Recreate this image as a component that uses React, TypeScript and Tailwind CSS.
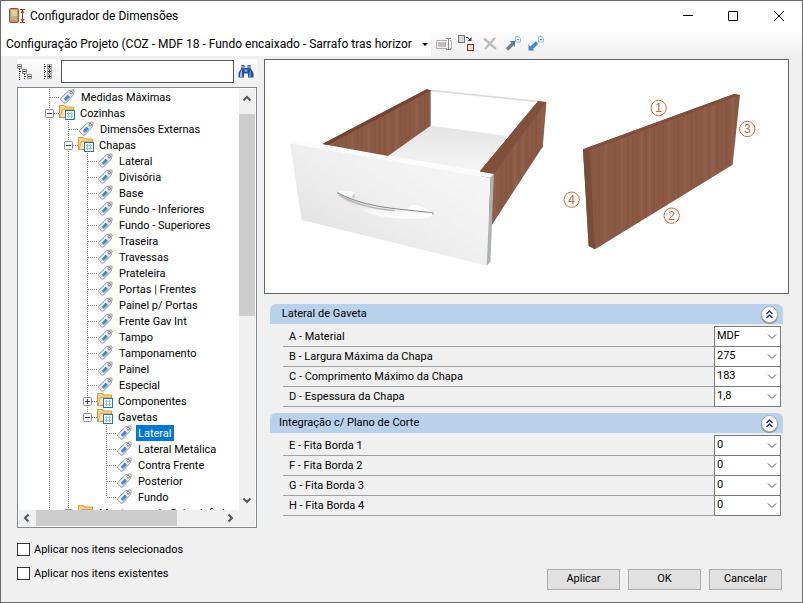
import { useState } from "react";
import type { ReactNode } from "react";

type Kind = "tag" | "folder";
type Box = "minus" | "plus" | null;

interface TreeRow {
  label: string;
  level: number;
  kind: Kind;
  box?: Box;
  last?: boolean;
}

const tag = (label: string, level: number, last = false): TreeRow => ({ label, level, kind: "tag", last });
const folder = (label: string, level: number, box: Box, last = false): TreeRow => ({ label, level, kind: "folder", box, last });

const rows: TreeRow[] = [
  tag("Medidas Máximas", 1),
  folder("Cozinhas", 1, "minus"),
  tag("Dimensões Externas", 2),
  folder("Chapas", 2, "minus"),
  tag("Lateral", 3),
  tag("Divisória", 3),
  tag("Base", 3),
  tag("Fundo - Inferiores", 3),
  tag("Fundo - Superiores", 3),
  tag("Traseira", 3),
  tag("Travessas", 3),
  tag("Prateleira", 3),
  tag("Portas | Frentes", 3),
  tag("Painel p/ Portas", 3),
  tag("Frente Gav Int", 3),
  tag("Tampo", 3),
  tag("Tamponamento", 3),
  tag("Painel", 3),
  tag("Especial", 3),
  folder("Componentes", 3, "plus"),
  folder("Gavetas", 3, "minus", true),
  tag("Lateral", 4),
  tag("Lateral Metálica", 4),
  tag("Contra Frente", 4),
  tag("Posterior", 4),
  tag("Fundo", 4, true),
  folder("Montagem de Caixa Inferior", 2, "minus"),
];

const sections = [
  {
    title: " Lateral de Gaveta",
    fields: [
      { label: "A - Material", value: "MDF" },
      { label: "B - Largura Máxima da Chapa", value: "275" },
      { label: "C - Comprimento Máximo da Chapa", value: "183" },
      { label: "D - Espessura da Chapa", value: "1,8" },
    ],
  },
  {
    title: "Integração c/ Plano de Corte",
    fields: [
      { label: "E - Fita Borda 1", value: "0" },
      { label: "F - Fita Borda 2", value: "0" },
      { label: "G - Fita Borda 3", value: "0" },
      { label: "H - Fita Borda 4", value: "0" },
    ],
  },
];

/* ---------- icons ---------- */

function AppIcon() {
  return (
    <svg width="17" height="16" viewBox="0 0 17 16">
      <rect x="0.5" y="0.5" width="9" height="14" rx="1" fill="#c9935f" stroke="#8a5a35" />
      <rect x="2" y="2" width="6" height="10" fill="#dccf9c" />
      <path d="M2 8h6v4H2z" fill="#c0b184" />
      <path d="M11 1.5h5M11 14.5h5M13.5 2v12" stroke="#a83a20" />
      <path d="M11.5 5 13.5 2l2 3zM11.5 11l2 3 2-3z" fill="#a83a20" />
    </svg>
  );
}

function TagIcon() {
  return (
    <svg width="17" height="16" viewBox="0 0 17 16" className="shrink-0">
      <path d="M1.5 9.5 9.5 1.8 14.5 0.8 15.2 2 14.2 6 6.5 14.2 5 14.2 1.5 10.8z" fill="#e6e6e8" stroke="#9c9ca0" />
      <path d="M2.6 10 10 3l1 1-7 7.5z" fill="#fff" />
      <path d="M4.6 9.8 8.6 5.6 11 7.9 7 12z" fill="#2f86d3" />
      <path d="m5.6 9.8 3-3.1M7.2 10.9l3-3.1" stroke="#8cc4f2" strokeDasharray="1 1" />
      <circle cx="12.2" cy="3.7" r="1.3" fill="#fff" stroke="#77777b" />
    </svg>
  );
}

function FolderIcon() {
  return (
    <svg width="17" height="16" viewBox="0 0 17 16" className="shrink-0">
      <path d="M0.5 12.5v-12h5l1 1.5h8v10.5z" fill="#f8d488" stroke="#d99a3e" />
      <path d="M1 12.5 3.5 4.500H15v3" fill="#fde9b8" stroke="#e0a64c" />
      <path d="M0.500 12.500H7" stroke="#d99a3e" />
      <rect x="6.500" y="5.500" width="9" height="9" fill="#fff" stroke="#1a78c2" />
      <path d="M8 8.500h6M8 11.500h6M9.500 7v6M12.500 7v6" stroke="#8fc3ea" />
    </svg>
  );
}

function Binoculars() {
  return (
    <svg width="16" height="15" viewBox="0 0 16 15">
      <path d="M3.500 1h3v3h3V1h3v3l3 5v4.500h-5.500V9.500h-4v4H0.500V9l3-5z" fill="#234f9c" />
      <path d="M2 9.500 4 5v8H2zM11.500 9.500l1-4v7.500h-1z" fill="#9dc0ec" />
      <path d="M4.500 1.500h1v3h-1zM10.500 1.500h1v3h-1z" fill="#b8d2f2" />
      <path d="M6.500 5.500h3v2h-3z" fill="#8fb4e4" />
    </svg>
  );
}

function CollapseTree() {
  return (
    <svg width="16" height="16" viewBox="0 0 16 16" fill="none" stroke="#8a8a8a">
      <path d="M2.500 5v11M3 7.500h3M7.500 10v6M8 12.500h3" strokeDasharray="1 1" stroke="#222" />
      <path d="M0.500 0.500h4v4h-4zM5.500 5.500h4v4h-4zM10.500 10.500h4v4h-4z" fill="#fff" />
      <path d="M1 2.500h3M6 7.500h3M11 12.500h3" stroke="#444" />
    </svg>
  );
}

function ExpandTree() {
  return (
    <svg width="10" height="16" viewBox="0 0 10 16" fill="none" stroke="#999">
      <path d="M1.500 0v16M2 2.500h2M2 7.500h2M2 12.500h2" strokeDasharray="1 1" stroke="#222" />
      <path d="M4.500 0.500h4v4h-4zM4.500 5.500h4v4h-4zM4.500 10.500h4v4h-4z" fill="#fff" />
      <path d="M5 2.500h3M6.500 1v3M5 7.500h3M6.500 6v3M5 12.500h3M6.500 11v3" stroke="#333" />
    </svg>
  );
}

function RenameIcon() {
  return (
    <svg width="16" height="14" viewBox="0 0 16 14" fill="none" stroke="#b4b0b0">
      <path d="M11 3.500H0.500v8H11M14 3.500h1.500v8H14" />
      <rect x="2" y="5" width="8" height="5" fill="#c2bcbc" stroke="none" />
      <path d="M10 1.500h5M10 12.500h5M12.500 2v10" stroke="#8d8d8d" />
    </svg>
  );
}

function CopyIcon() {
  return (
    <svg width="17" height="17" viewBox="0 0 17 17" fill="none">
      <rect x="0.500" y="0.500" width="6" height="7" fill="#d9d9d9" stroke="#777" />
      <path d="M8 2.500h2l2 2.500" stroke="#1c3f7c" />
      <path d="M9.500 6h4V2z" fill="#1c3f7c" />
      <rect x="9.500" y="9.500" width="6" height="6" fill="#e6e3df" stroke="#8c2f12" />
    </svg>
  );
}

function DeleteIcon() {
  return (
    <svg width="14" height="13" viewBox="0 0 14 13" fill="none" stroke="#c0bcbc" strokeWidth="2.400">
      <path d="M1 1.500 13 12M12 1 2 12" />
    </svg>
  );
}

function PageArrow({ up }: { up?: boolean }) {
  return (
    <svg width="16" height="16" viewBox="0 0 16 16">
      <path d="M10.500 0.500h3l2 2v3.500h-5z" fill="#e4f4fb" stroke="#8cc6e4" />
      <path d="M12 3.500h2" stroke="#4a9ac8" />
      <path d="M2 13.500 9 6.500" stroke={up ? "#7b7f84" : "#3b8bd2"} strokeWidth="3.500" />
      {up ? <path d="M4.500 5H10v6z" fill="#5c7f9c" /> : <path d="M0.500 14.500V8.500l6 6z" fill="#3b8bd2" />}
    </svg>
  );
}

function Chevron({ dir }: { dir: "up" | "down" | "left" | "right" }) {
  const d = {
    up: "M1.500 6.500 5 3l3.500 3.500",
    down: "M1.500 3.500 5 7l3.500-3.500",
    left: "M6.500 1.500 3 5l3.500 3.500",
    right: "M3.500 1.500 7 5 3.500 8.500",
  }[dir];
  return (
    <svg width="10" height="10" viewBox="0 0 10 10" fill="none" stroke="#555" strokeWidth="2">
      <path d={d} />
    </svg>
  );
}

/* ---------- tree ---------- */

function Guide({ to = 16, tee, box }: { to?: number; tee?: boolean; box?: Box }) {
  return (
    <svg width="19" height="16" viewBox="0 0 19 16" className="shrink-0" fill="none">
      <path d={`M9.500 0V${to}`} stroke="#808080" strokeDasharray="1 1" />
      {tee && <path d="M10 8.500h9" stroke="#808080" strokeDasharray="1 1" />}
      {box && (
        <>
          <rect x="5.500" y="4.500" width="8" height="8" rx="1" fill="#f6f6f6" stroke="#919191" />
          <path d={box === "plus" ? "M7 8.500h5M9.500 6v5" : "M7 8.500h5"} stroke="#2b3f86" />
        </>
      )}
    </svg>
  );
}

function Tree() {
  const [selected, setSelected] = useState(21);
  return (
    <ul className="min-w-0 flex-1 overflow-hidden pl-[21px]">
      {rows.map((row, i) => (
        <li key={i} className="flex h-4 items-center">
          {Array.from({ length: row.level - 1 }, (_, l) =>
            // the level 3 branch ends at its last folder
            l === 2 ? <span key={l} className="w-[19px] shrink-0" /> : <Guide key={l} />
          )}
          <Guide tee to={row.last ? 8 : 16} box={row.box} />
          {row.kind === "tag" ? <TagIcon /> : <FolderIcon />}
          <button
            type="button"
            onClick={() => setSelected(i)}
            className={
              "h-4 whitespace-nowrap px-[2px] leading-[18px] " +
              (row.kind === "tag" ? "ml-[3px] " : "ml-[2px] ") +
              (i === selected ? "bg-[#0078d7] text-white" : "")
            }
          >
            {row.label}
          </button>
        </li>
      ))}
    </ul>
  );
}

/* ---------- picture ---------- */

function Preview() {
  const marks = [
    { n: 1, x: 1184, y: 144 },
    { n: 3, x: 1450, y: 207 },
    { n: 4, x: 923, y: 419 },
    { n: 2, x: 1223, y: 467 },
  ];
  return (
    <svg viewBox="3 0 1569 699" className="block w-full">
      <defs>
        <pattern id="wood" width="190" height="900" patternUnits="userSpaceOnUse">
          <rect width="190" height="900" fill="#8b5a44" />
          <path d="M6 0v900M31 0v900M57 0v900M103 0v900M142 0v900M171 0v900" stroke="#84543f" strokeWidth="4" />
          <path d="M17 0v900M76 0v900M124 0v900M183 0v900" stroke="#91604a" strokeWidth="7" />
          <path d="M44 0v900M91 0v900M156 0v900" stroke="#7f503b" strokeWidth="2" />
        </pattern>
        <linearGradient id="front" x1="0" y1="1" x2="1" y2="0">
          <stop offset="0" stopColor="#dcdcdc" />
          <stop offset="0.5" stopColor="#efefef" />
          <stop offset="1" stopColor="#f8f8f8" />
        </linearGradient>
        <linearGradient id="base" x1="0" y1="0" x2="0" y2="1">
          <stop offset="0" stopColor="#e4e4e4" />
          <stop offset="1" stopColor="#f5f5f5" />
        </linearGradient>
        <linearGradient id="grip" x1="0" y1="0" x2="0" y2="1">
          <stop offset="0" stopColor="#c4c0c0" />
          <stop offset="0.7" stopColor="#f6f6f6" />
          <stop offset="1" stopColor="#fff" />
        </linearGradient>
      </defs>

      {/* drawer */}
      <path d="M500 197 730 228 648 333 372 287z" fill="url(#base)" />
      <path d="M498 91 826 125" stroke="#dcdcdf" strokeWidth="5" />
      <path d="M175 252 488 88 500 92V197L372 288z" fill="url(#wood)" />
      <path d="M175 252 488 88 503 91 192 255z" fill="#74462f" />
      <path d="M648 333 822 124 846 126 835 262 684 494z" fill="url(#wood)" />
      <path d="M648 333 822 124 846 126 690 342z" fill="#80503a" />
      <path d="M846 126 835 262" stroke="#6d4637" strokeWidth="2" />
      <path d="M78 250 680 354 668 617 113 480z" fill="url(#front)" />
      <path d="M78 250 92 242 690 342 680 354z" fill="#fbfbfb" />
      <path d="M680 352 690 342 679 606 668 617z" fill="#adb1b1" />

      {/* handle */}
      <path d="M222 392 265 394 274 401 272 416 240 408z" fill="#fbfbfb" />
      <path d="M430 447 445 434 462 436 507 456 500 462z" fill="#fdfdfd" />
      <path d="M270 416 274 401 262 408z" fill="#c9c9c9" />
      <path d="M219 398Q290 436 400 447L507 458 504 468 490 474Q400 480 330 464 262 444 219 398z" fill="url(#grip)" />
      <path d="M219 398Q290 436 400 447L506 458" fill="none" stroke="#8d8888" strokeWidth="3" />
      <path d="M224 404Q290 444 392 452" fill="none" stroke="#b9b2b2" strokeWidth="4" />
      <path d="M507 456v9" stroke="#999" strokeWidth="3" />

      {/* side panel */}
      <path d="M957 268 1410 102 1428 105 1406 314 993 568 974 558z" fill="url(#wood)" />
      <path d="M957 268 1410 102 1428 105 976 271z" fill="#7f4f3b" />
      <path d="M957 268 976 271 993 568 974 558z" fill="#784e3a" />
      {marks.map((m) => (
        <g key={m.n}>
          <circle cx={m.x} cy={m.y} r="23" fill="#fff" stroke="#d0683a" strokeWidth="3" />
          <text x={m.x} y={m.y + 12} textAnchor="middle" fontSize="36" fill="#c8622f" className="font-['Liberation_Sans',sans-serif]">
            {m.n}
          </text>
        </g>
      ))}
    </svg>
  );
}

/* ---------- controls ---------- */

function ToolButton({ label, children }: { label: string; children: ReactNode }) {
  return (
    <button type="button" aria-label={label} className="flex h-5 w-[23px] items-center justify-center">
      {children}
    </button>
  );
}

function Field({ label, value }: { label: string; value: string }) {
  return (
    <label className="-mb-px flex h-[21px] items-stretch">
      <span className="flex-1 border-b border-[#a0a0a0] pl-[6px] leading-[22px]">{label}</span>
      <span className="relative w-[67px]">
        <select defaultValue={value} className="block h-[21px] w-full appearance-none border border-[#7a7a7a] bg-white pl-[2px]">
          <option>{value}</option>
        </select>
        <svg width="10" height="6" viewBox="0 0 10 6" fill="none" stroke="#555" className="pointer-events-none absolute right-1 top-2">
          <path d="M1 0.500 5 4.500l4-4" />
        </svg>
      </span>
    </label>
  );
}

function Section({ title, fields }: (typeof sections)[number]) {
  const [open, setOpen] = useState(true);
  return (
    <section className="mb-[6px]">
      <div className="flex h-5 items-center rounded-t-md bg-[#b9d1ea] pl-[9px] pr-[5px]">
        <h2 className="flex-1 whitespace-pre leading-5">{title}</h2>
        <button
          type="button"
          aria-label="Recolher"
          onClick={() => setOpen(!open)}
          className="flex size-[17px] items-center justify-center rounded-full border border-[#a9adb3] bg-white shadow-[0_1px_1px_#888]"
        >
          <svg width="9" height="9" viewBox="0 0 9 9" fill="none" stroke="#1b3580" strokeWidth="1.400">
            <path d="M1.500 4 4.500 1l3 3M1.500 8l3-3 3 3" />
          </svg>
        </button>
      </div>
      {open && (
        <div className="ml-[13px] mr-[2px] mt-[2px] pb-px">
          {fields.map((f) => (
            <Field key={f.label} {...f} />
          ))}
        </div>
      )}
    </section>
  );
}

function Check({ label }: { label: string }) {
  return (
    <label className="flex h-[13px] items-center gap-1 leading-4">
      <input type="checkbox" className="size-[13px] appearance-none border border-[#333] bg-white checked:bg-[#0078d7]" />
      {label}
    </label>
  );
}

export default function App() {
  return (
    <div className="flex h-screen flex-col border border-[#6b6b6b] bg-[#f0f0f0] font-['Roboto','Liberation_Sans',sans-serif] text-[11px] text-black">
      <header className="flex h-[30px] shrink-0 items-center bg-white pl-2 text-xs">
        <AppIcon />
        <h1 className="ml-1 flex-1">Configurador de Dimensões</h1>
        <button type="button" aria-label="Minimizar" className="flex w-[45px] justify-center">
          <svg width="10" height="10" viewBox="0 0 10 10" stroke="#000"><path d="M0 4.500h10" /></svg>
        </button>
        <button type="button" aria-label="Maximizar" className="flex w-[45px] justify-center">
          <svg width="10" height="10" viewBox="0 0 10 10" fill="none" stroke="#000"><path d="M0.500 0.500h9v9h-9z" /></svg>
        </button>
        <button type="button" aria-label="Fechar" className="flex w-[47px] justify-center">
          <svg width="10" height="10" viewBox="0 0 10 10" stroke="#000"><path d="m0 0 10 10M10 0 0 10" /></svg>
        </button>
      </header>

      <div className="flex h-[25px] shrink-0 items-center bg-linear-to-b from-[#fdfdfd] to-[#f0f0f0]">
        <div className="relative mr-px bg-white">
          <select aria-label="Configuração" className="block h-6 w-[430px] appearance-none pl-[5px] pr-3 text-xs">
            <option>Configuração Projeto (COZ - MDF 18 - Fundo encaixado - Sarrafo tras horizor</option>
          </select>
          <svg width="6" height="3" viewBox="0 0 6 3" className="pointer-events-none absolute right-[3px] top-[11px]">
            <path d="M0 0h6L3 3z" />
          </svg>
        </div>
        <ToolButton label="Renomear"><RenameIcon /></ToolButton>
        <ToolButton label="Copiar"><CopyIcon /></ToolButton>
        <ToolButton label="Excluir"><DeleteIcon /></ToolButton>
        <ToolButton label="Exportar"><PageArrow up /></ToolButton>
        <ToolButton label="Importar"><PageArrow /></ToolButton>
      </div>

      <main className="flex min-h-0 flex-1 gap-[7px] pb-3 pl-4 pr-[13px] pt-[3px]">
        <div className="flex w-[240px] shrink-0 flex-col">
          <div className="mb-[3px] flex h-[25px] items-center bg-linear-to-b from-[#fdfdfd] to-[#f0f0f0]">
            <button type="button" aria-label="Recolher tudo" className="w-[26px]">
              <CollapseTree />
            </button>
            <button type="button" aria-label="Expandir tudo" className="w-[18px]">
              <ExpandTree />
            </button>
            <input aria-label="Pesquisar" className="h-[23px] min-w-0 flex-1 border border-[#555] bg-white px-1 outline-none" />
            <ToolButton label="Buscar"><Binoculars /></ToolButton>
          </div>

          <div className="flex min-h-0 flex-1 flex-col border border-[#828790] bg-white p-px">
            <div className="flex min-h-0 flex-1">
              <Tree />
              <div className="flex w-4 shrink-0 flex-col items-center bg-[#f0f0f0] py-[5px]">
                <Chevron dir="up" />
                <div className="mt-[10px] h-[202px] w-full bg-[#cdcdcd]" />
                <div className="mt-auto"><Chevron dir="down" /></div>
              </div>
            </div>
            <div className="flex h-4 shrink-0 items-center bg-[#f0f0f0] pl-[3px] pr-5">
              <Chevron dir="left" />
              <div className="ml-1 h-full w-[141px] bg-[#cdcdcd]" />
              <div className="ml-auto"><Chevron dir="right" /></div>
            </div>
          </div>

          <div className="flex flex-col gap-[11px] pb-[10px] pt-[15px]">
            <Check label="Aplicar nos itens selecionados" />
            <Check label="Aplicar nos itens existentes" />
          </div>
        </div>

        <div className="flex min-w-0 flex-1 flex-col">
          <div className="border border-[#646464] bg-white">
            <Preview />
          </div>
          <div className="pl-[6px] pr-[6px] pt-[10px]">
            {sections.map((s) => (
              <Section key={s.title} {...s} />
            ))}
          </div>
          <footer className="mt-auto flex justify-end gap-2 pr-[7px]">
            {["Aplicar", "OK", "Cancelar"].map((b) => (
              <button key={b} type="button" className="h-[21px] w-[73px] border border-[#adadad] bg-[#e1e1e1]">
                {b}
              </button>
            ))}
          </footer>
        </div>
      </main>
    </div>
  );
}
